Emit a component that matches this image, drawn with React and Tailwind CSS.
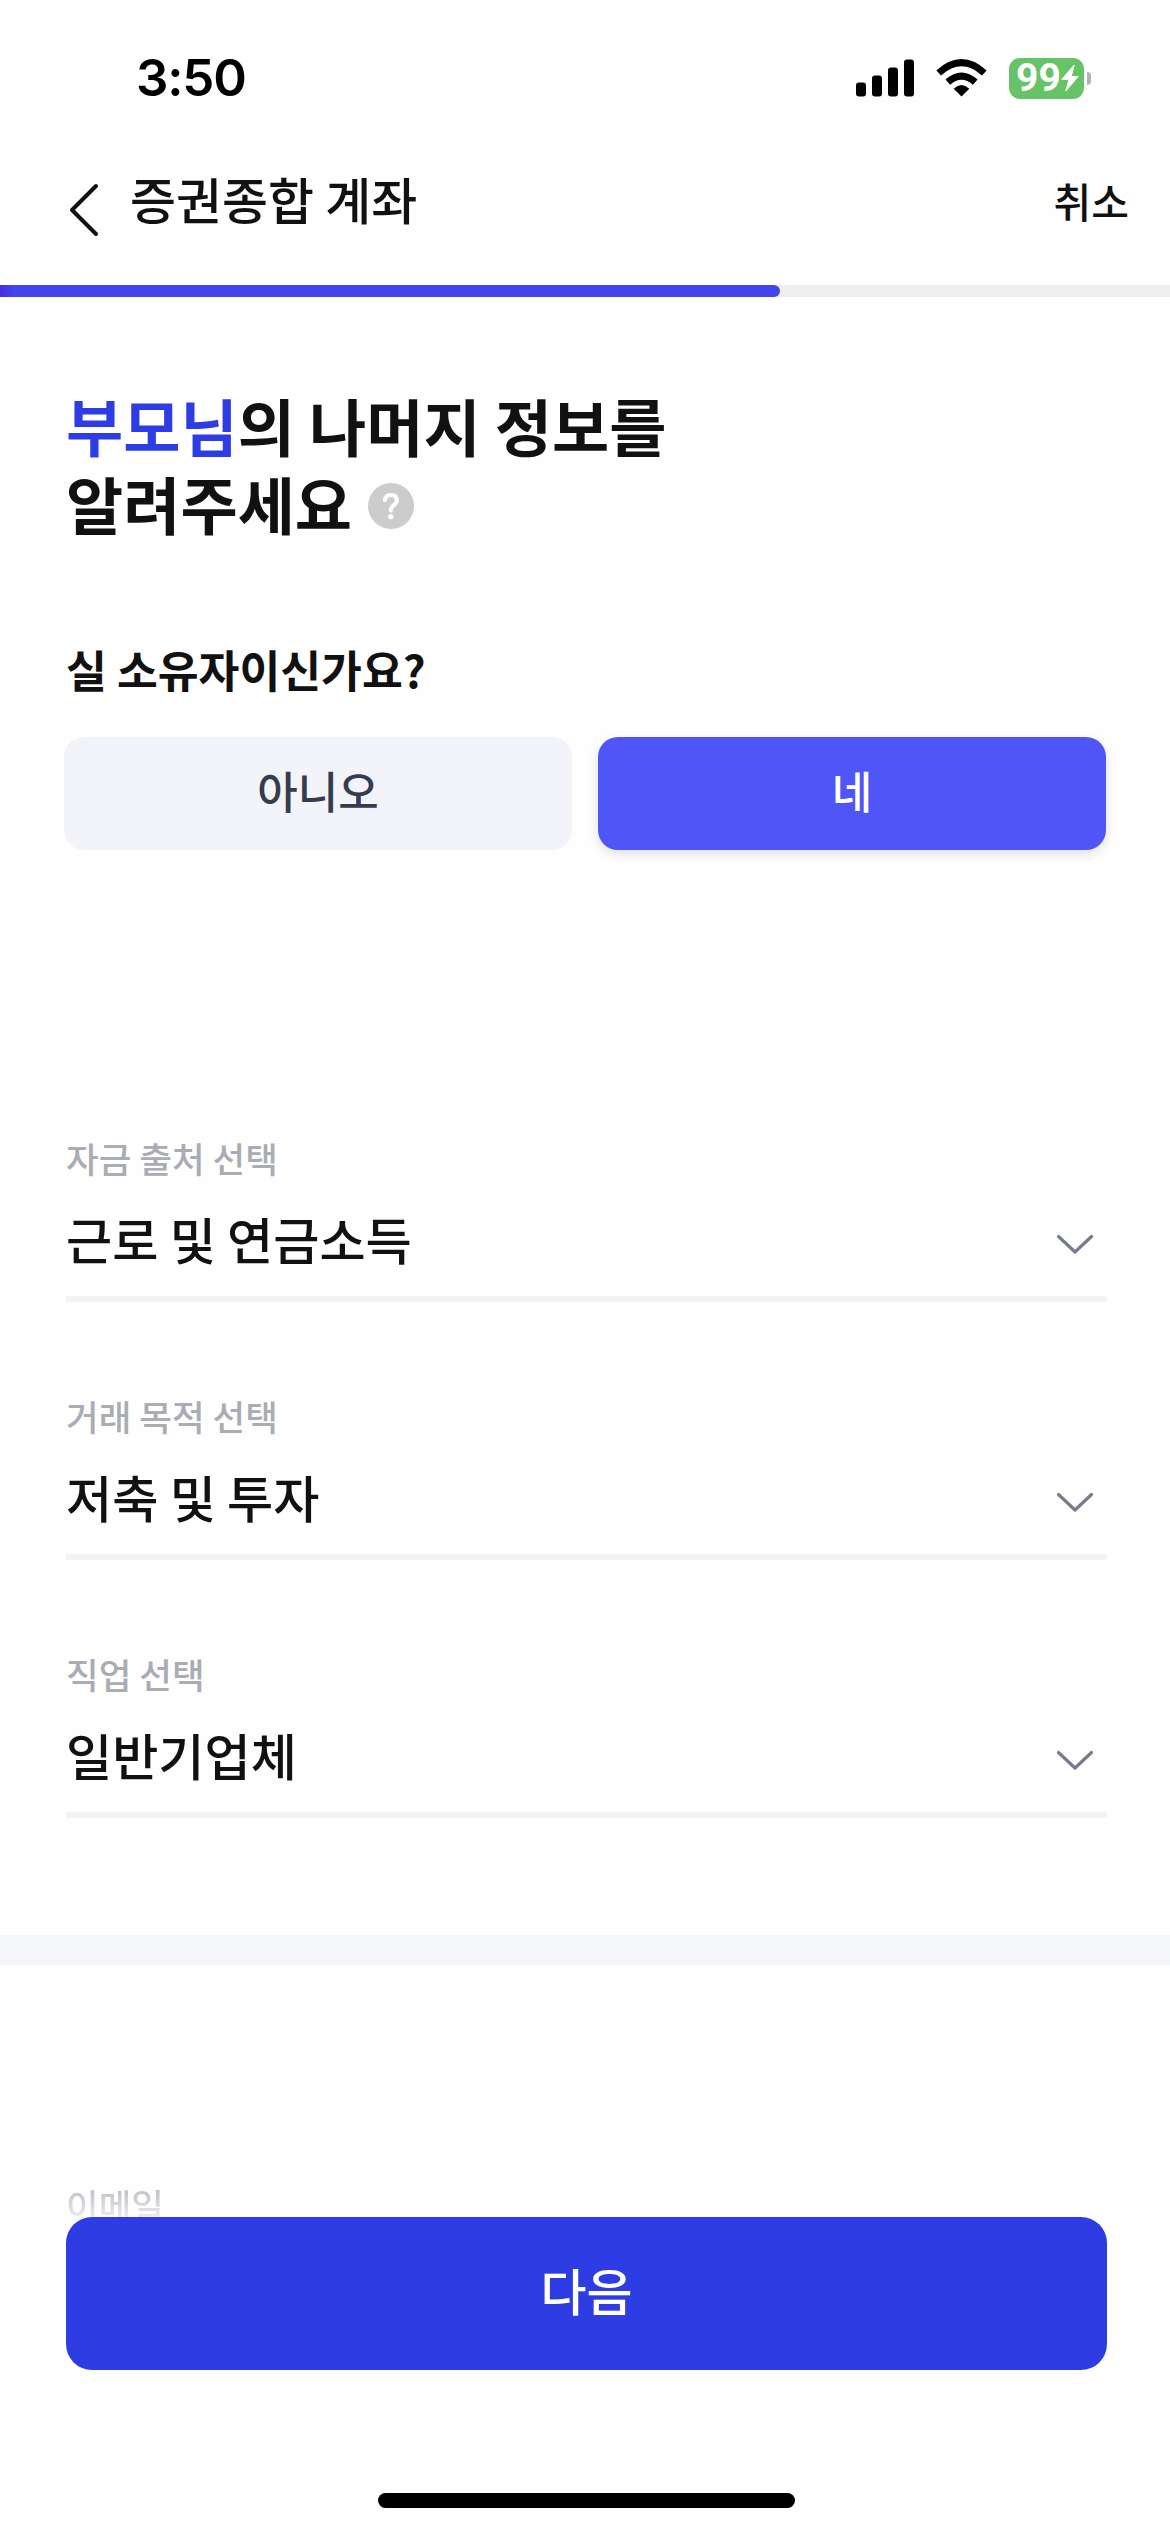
import React from "react";

const fields = [
  { label: "자금 출처 선택", value: "근로 및 연금소득" },
  { label: "거래 목적 선택", value: "저축 및 투자" },
  { label: "직업 선택", value: "일반기업체" },
];

function StatusBar() {
  return (
    <div className="flex h-[156px] shrink-0 items-center justify-between pl-[136px] pr-[79px] font-['Inter',sans-serif]">
      <span className="text-[51px] leading-[60px] font-semibold tracking-[-1.2px] text-black">3:50</span>
      <div className="flex items-center">
        <svg width="58" height="38" viewBox="0 0 58 38" className="mr-[22px]">
          <rect x="0" y="23.5" width="10" height="14" rx="3" />
          <rect x="16" y="16.5" width="10" height="21" rx="3" />
          <rect x="32" y="8.5" width="10" height="29" rx="3" />
          <rect x="48" y="0.5" width="10" height="37" rx="3" />
        </svg>
        <svg width="51" height="38" viewBox="0 0 51 38" className="mr-[22px]">
          <path d="M25.5 37.5 L17.7 29.7 Q25.5 22.5 33.3 29.7 Z" />
          <path d="M11.8 23.2 Q25.5 11 39.2 23.2" fill="none" stroke="#000" strokeWidth="7" />
          <path d="M2.7 14 Q25.5 -6.6 48.3 14" fill="none" stroke="#000" strokeWidth="7" />
        </svg>
        <div className="flex h-[41px] w-[75px] items-center rounded-[11px] bg-[#66c467] pl-[7px]">
          <span className="w-[45px] font-['Roboto',sans-serif] text-[39px] leading-[41px] font-bold text-white">99</span>
          <svg width="18" height="28" viewBox="0 0 18 28" className="shrink-0">
            <path d="M13.2 1 L0.8 15.3 H8 L4.8 27 L17.2 12.5 H10.2 Z" fill="#fff" stroke="#fff" strokeWidth="1" strokeLinejoin="round" />
          </svg>
        </div>
        <div className="ml-[3px] h-[13px] w-[4px] rounded-r-full bg-[#b3b3b3]" />
      </div>
    </div>
  );
}

function Header() {
  return (
    <header className="flex h-[129px] shrink-0 items-start pl-[69px] pr-[41px] text-[#111]">
      <svg width="31" height="54" viewBox="0 0 31 54" className="mt-[27px]" fill="none" stroke="#111" strokeWidth="4" strokeLinecap="round" strokeLinejoin="round">
        <path d="M27 3 L3 27 L27 51" />
      </svg>
      <h1 className="ml-[30px] mt-[5px] text-[50px] leading-[74px] font-medium">증권종합 계좌</h1>
      <button className="ml-auto mt-[14px] text-[41px] leading-[60px] font-medium">취소</button>
    </header>
  );
}

function SelectField({ label, value }) {
  return (
    <div className="mb-[48px] flex h-[210px] flex-col border-b-[6px] border-[#f3f3f3]">
      <span className="mt-[41px] text-[35.5px] leading-[50px] font-medium text-[#a9acb3]">{label}</span>
      <div className="mt-[20px] flex items-center justify-between pr-[13px]">
        <span className="text-[50.2px] leading-[70px] font-medium text-[#111]">{value}</span>
        <svg width="38" height="22" viewBox="0 0 38 22" className="mt-[14px]" fill="none" stroke="#767c8c" strokeWidth="3.2" strokeLinecap="round" strokeLinejoin="round">
          <path d="M2.5 2.5 L19 18 L35.5 2.5" />
        </svg>
      </div>
    </div>
  );
}

export default function App() {
  return (
    <div className="relative flex h-[2532px] w-[1170px] flex-col overflow-hidden bg-[#fefefe] font-['Noto_Sans_CJK_KR',sans-serif]">
      <StatusBar />
      <Header />
      <div className="h-[12px] shrink-0 bg-[#eee]">
        <div className="h-full w-[780px] rounded-r-full bg-linear-to-r from-[#4a2cdf] to-[#4245ec] to-[14px]" />
      </div>

      <main className="flex grow flex-col">
        <section className="flex flex-col px-[66px] pt-[89px]">
          <h2 className="text-[62.2px] leading-[78px] font-bold text-[#111]">
            <span className="text-[#2e3de3]">부모님</span>의 나머지 정보를
            <span className="flex items-center">
              알려주세요
              <svg width="46" height="46" viewBox="0 0 46 46" className="ml-[16px] mt-[6px]">
                <circle cx="23" cy="23" r="23" fill="#ccc" />
                <path d="M17 17 Q17.4 12 23 12 Q28.8 12 28.8 17.2 Q28.8 20 26 22 Q22.8 24.4 22.8 27.6" fill="none" stroke="#fff" strokeWidth="4" strokeLinecap="round" />
                <circle cx="22.8" cy="33.6" r="2.7" fill="#fff" />
              </svg>
            </span>
          </h2>
          <h3 className="mt-[97px] text-[44.4px] leading-[60px] font-bold text-[#111]">실 소유자이신가요?</h3>
        </section>

        <div className="mt-[38px] flex gap-[26px] px-[64px] text-[44px] font-medium">
          <button className="flex h-[113px] flex-1 items-center justify-center rounded-[20px] bg-[#f3f4f9] pb-[7px] text-[#363c50]">아니오</button>
          <button className="flex h-[113px] flex-1 items-center justify-center rounded-[20px] bg-[#4f55f7] pb-[7px] text-white shadow-[0_4px_12px_rgba(0,0,0,0.12)]">네</button>
        </div>

        <section className="mt-[242px] flex flex-col pl-[66px] pr-[63px]">
          {fields.map((f) => (
            <SelectField key={f.label} {...f} />
          ))}
        </section>

        <div className="mt-[69px] h-[30px] bg-[#f5f6f9]" />

        <div className="mt-[215px] pl-[66px]">
          <span className="block bg-linear-to-b from-[#c0c2c8] from-[10px] to-[#f2f2f3] to-[42px] bg-clip-text text-[35.5px] leading-[50px] font-medium text-transparent">이메일</span>
        </div>
      </main>

      <footer className="absolute inset-x-0 bottom-0 flex h-[315px] flex-col items-center bg-[#fefefe] pl-[66px] pr-[63px]">
        <button className="h-[153px] w-full rounded-[26px] bg-[#2e3de3] pb-[8px] text-[50px] font-medium text-white">다음</button>
        <div className="mt-[123px] h-[15px] w-[417px] rounded-full bg-black" />
      </footer>
    </div>
  );
}
